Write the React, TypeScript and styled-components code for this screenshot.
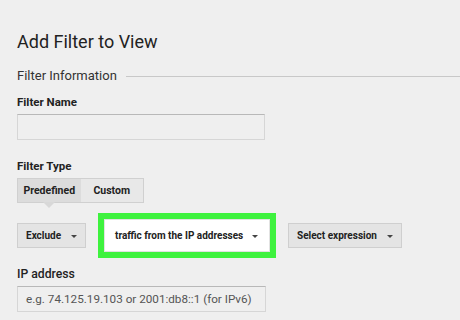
import React from "react";
import styled, { createGlobalStyle } from "styled-components";

const Global = createGlobalStyle`
  html, body { margin: 0; padding: 0; background: #efefef; }
  body { font-family: Roboto, "Liberation Sans", Arial, sans-serif; color: #222; }
`;

const Page = styled.div`
  width: 460px;
  height: 320px;
  overflow: hidden;
  box-sizing: border-box;
  padding: 31px 0 0 17px;
  display: flex;
  flex-direction: column;
`;

const Title = styled.h1`
  margin: 0;
  font-size: 18px;
  font-weight: 400;
  line-height: 22px;
  color: #222;
`;

const SectionHead = styled.div`
  margin-top: 14px;
  display: flex;
  align-items: center;
  gap: 9px;
  font-size: 13px;
  line-height: 18px;
  color: #333;
  &::after {
    content: "";
    flex: 1;
    height: 1px;
    background: #c8c8c8;
    margin-top: 1px;
  }
`;

const Label = styled.div<{ $bold?: boolean; $top: number }>`
  margin-top: ${(p) => p.$top}px;
  font-size: ${(p) => (p.$bold ? 11.5 : 12.2)}px;
  font-weight: ${(p) => (p.$bold ? 700 : 500)};
  line-height: 16px;
  color: #222;
`;

const Input = styled.div<{ $w: number }>`
  margin-top: 4px;
  width: ${(p) => p.$w}px;
  height: 26px;
  box-sizing: border-box;
  border: 1px solid #d6d6d6;
  border-top-color: #b8b8b8;
  background: #efefef;
  font-size: 11.7px;
  color: #555;
  display: flex;
  align-items: center;
  padding-left: 8px;
  white-space: nowrap;
`;

const Segmented = styled.div`
  margin-top: 4px;
  display: flex;
  width: 127px;
  height: 25px;
  box-sizing: border-box;
  border: 1px solid #d0d0d0;
`;

const Seg = styled.div<{ $active?: boolean }>`
  position: relative;
  flex: 1;
  display: flex;
  align-items: center;
  justify-content: center;
  font-size: 10.5px;
  font-weight: 700;
  color: #222;
  background: ${(p) => (p.$active ? "#dcdcdc" : "#e8e8e8")};
  ${(p) =>
    p.$active &&
    `&::after {
      content: "";
      position: absolute;
      left: 50%;
      bottom: -6px;
      margin-left: -6px;
      border-left: 6px solid transparent;
      border-right: 6px solid transparent;
      border-top: 6px solid #d8d8d8;
    }`}
`;

const Row = styled.div`
  margin-top: 10px;
  display: flex;
  align-items: center;
  gap: 12px;
`;

const Highlight = styled.div`
  border: 6px solid #3ef23e;
  background: #3ef23e;
`;

const Select = styled.div<{ $w: number; $white?: boolean; $h?: number }>`
  width: ${(p) => p.$w}px;
  height: ${(p) => p.$h ?? 25}px;
  box-sizing: border-box;
  border: 1px solid ${(p) => (p.$white ? "#e2e2e2" : "#cfcfcf")};
  background: ${(p) => (p.$white ? "#fff" : "#e4e4e4")};
  display: flex;
  align-items: center;
  justify-content: space-between;
  padding: 0 ${(p) => (p.$white ? 11 : 8)}px 0 ${(p) => (p.$white ? 10 : 8)}px;
  font-size: 10px;
  font-weight: 700;
  color: #222;
  white-space: nowrap;
`;

const Caret = styled.span`
  width: 0;
  height: 0;
  border-left: 3.5px solid transparent;
  border-right: 3.5px solid transparent;
  border-top: 3.5px solid #444;
  margin-top: 1px;
`;

export default function App() {
  return (
    <>
      <Global />
      <Page>
        <Title>Add Filter to View</Title>
        <SectionHead>Filter Information</SectionHead>
        <Label $bold $top={9}>Filter Name</Label>
        <Input $w={248} />
        <Label $bold $top={18}>Filter Type</Label>
        <Segmented>
          <Seg $active>Predefined</Seg>
          <Seg>Custom</Seg>
        </Segmented>
        <Row>
          <Select $w={69}>
            Exclude <Caret />
          </Select>
          <Highlight>
            <Select $w={166} $h={33} $white>
              traffic from the IP addresses <Caret />
            </Select>
          </Highlight>
          <Select $w={114}>
            Select expression <Caret />
          </Select>
        </Row>
        <Label $top={8}>IP address</Label>
        <Input $w={249}>e.g. 74.125.19.103 or 2001:db8::1 (for IPv6)</Input>
      </Page>
    </>
  );
}
